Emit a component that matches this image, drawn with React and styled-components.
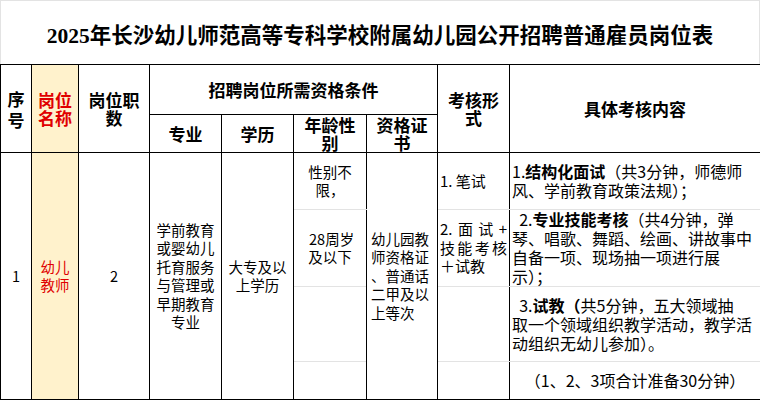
import React from "react";
import styled, { createGlobalStyle } from "styled-components";

const GlobalStyle = createGlobalStyle`
  html, body {
    margin: 0;
    padding: 0;
    background: #fff;
  }
  body {
    font-family: "Noto Sans CJK SC", sans-serif;
    color: #000;
  }
`;

const LINE = "#000";
const SOFT = "#e3e3e3";
const RED = "#e00000";
const CREAM = "#fff2cc";

const Sheet = styled.div`
  width: 760px;
  height: 400px;
  overflow: hidden;
  background: #fff;
`;

const Title = styled.h1`
  box-sizing: border-box;
  height: 64px;
  margin: 0;
  padding-top: 2px;
  display: flex;
  align-items: center;
  justify-content: center;
  border: 1px solid ${SOFT};
  border-bottom: none;
  font-family: "Liberation Serif", "Noto Sans CJK SC", serif;
  font-size: 21.5px;
  font-weight: 700;
`;

const Table = styled.table`
  width: 760px;
  border-collapse: collapse;
  table-layout: fixed;
`;

const HeadCell = styled.th`
  border: 1px solid ${LINE};
  padding: 0 2px;
  font-size: 17px;
  line-height: ${(p) => p.$lh || 18}px;
  font-weight: 700;
  text-align: center;
  vertical-align: middle;
  color: ${(p) => (p.$red ? RED : "#000")};
  background: ${(p) => (p.$cream ? CREAM : "transparent")};
`;

const Cell = styled.td`
  border: 1px solid ${LINE};
  padding: 0 2px;
  font-size: 14.5px;
  line-height: 18.5px;
  text-align: ${(p) => p.$align || "center"};
  vertical-align: middle;
  color: ${(p) => (p.$red ? RED : "#000")};
  background: ${(p) => (p.$cream ? CREAM : "transparent")};
`;

const SubCell = styled(Cell)`
  border-top-color: ${(p) => (p.$first ? LINE : SOFT)};
  border-bottom-color: ${(p) => (p.$last ? LINE : SOFT)};
`;

const Detail = styled(SubCell)`
  font-size: 16px;
  line-height: 19px;
  white-space: pre;
  padding: 0 2px;
`;

const Strong = styled.b`
  font-weight: 700;
`;

const Spread = styled.span`
  display: flex;
  justify-content: space-between;
  font-size: 15px;
  line-height: 18.5px;
`;

const Plain = styled.span`
  display: block;
  font-size: 15px;
  line-height: 18.5px;
`;

function JustifyLine({ parts }) {
  return (
    <Spread>
      {parts.map((t, i) => (
        <span key={i}>{t}</span>
      ))}
    </Spread>
  );
}

const widths = [31, 47, 71, 72, 72, 73, 71, 72, 251];
const headHeights = [50, 38];
const rowHeights = [57, 77, 75, 38];

export default function App() {
  return (
    <Sheet>
      <GlobalStyle />
      <Title>2025年长沙幼儿师范高等专科学校附属幼儿园公开招聘普通雇员岗位表</Title>
      <Table>
        <colgroup>
          {widths.map((w, i) => (
            <col key={i} style={{ width: w }} />
          ))}
        </colgroup>
        <thead>
          <tr style={{ height: headHeights[0] }}>
            <HeadCell rowSpan={2} $lh={21}>序<br />号</HeadCell>
            <HeadCell rowSpan={2} $red $cream>岗位<br />名称</HeadCell>
            <HeadCell rowSpan={2}>岗位职<br />数</HeadCell>
            <HeadCell colSpan={4}>招聘岗位所需资格条件</HeadCell>
            <HeadCell rowSpan={2}>考核形<br />式</HeadCell>
            <HeadCell rowSpan={2}>具体考核内容</HeadCell>
          </tr>
          <tr style={{ height: headHeights[1] }}>
            <HeadCell>专业</HeadCell>
            <HeadCell>学历</HeadCell>
            <HeadCell>年龄性<br />别</HeadCell>
            <HeadCell>资格证<br />书</HeadCell>
          </tr>
        </thead>
        <tbody>
          <tr style={{ height: rowHeights[0] }}>
            <Cell rowSpan={4}>1</Cell>
            <Cell rowSpan={4} $red $cream>幼儿<br />教师</Cell>
            <Cell rowSpan={4}>2</Cell>
            <Cell rowSpan={4}>
              学前教育<br />或婴幼儿<br />托育服务<br />与管理或<br />早期教育<br />专业
            </Cell>
            <Cell rowSpan={4}>大专及以<br />上学历</Cell>
            <SubCell $first>性别不<br />限，</SubCell>
            <Cell rowSpan={4} $align="left" style={{ paddingLeft: 4 }}>
              幼儿园教<br />师资格证<br />、普通话<br />二甲及以<br />上等次
            </Cell>
            <SubCell $first $align="left">
              <Plain>1. 笔试</Plain>
            </SubCell>
            <Detail $first $align="left">
              1.<Strong>结构化面试</Strong>（共3分钟，师德师{"\n"}风、学前教育政策法规）；
            </Detail>
          </tr>
          <tr style={{ height: rowHeights[1] }}>
            <SubCell>{"\u00a0"}28周岁<br />及以下</SubCell>
            <SubCell $align="left">
              <JustifyLine parts={["2.", "面", "试", "+"]} />
              <JustifyLine parts={["技", "能", "考", "核"]} />
              <Plain>＋试教</Plain>
            </SubCell>
            <Detail $align="left">
              {"  "}2.<Strong>专业技能考核</Strong>（共4分钟，弹{"\n"}琴、唱歌、舞蹈、绘画、讲故事中{"\n"}自备一项、现场抽一项进行展{"\n"}示）；
            </Detail>
          </tr>
          <tr style={{ height: rowHeights[2] }}>
            <SubCell />
            <SubCell />
            <Detail $align="left">
              {"  "}3.<Strong>试教（</Strong>共5分钟，五大领域抽{"\n"}取一个领域组织教学活动，教学活{"\n"}动组织无幼儿参加）。
            </Detail>
          </tr>
          <tr style={{ height: rowHeights[3] }}>
            <SubCell $last />
            <SubCell $last />
            <Detail $last>（1、2、3项合计准备30分钟）</Detail>
          </tr>
        </tbody>
      </Table>
    </Sheet>
  );
}
